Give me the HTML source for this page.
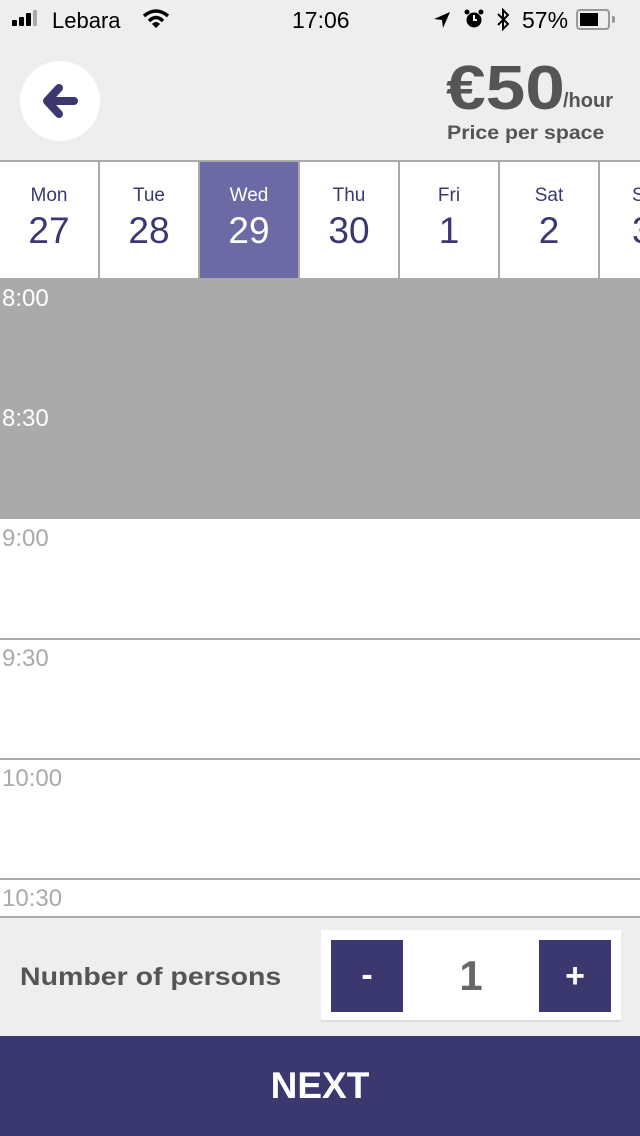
<!DOCTYPE html>
<html><head><meta charset="utf-8"><style>
*{margin:0;padding:0;box-sizing:border-box}
body{width:640px;height:1136px;overflow:hidden;background:#eee;font-family:"Liberation Sans",Arial,sans-serif;position:relative}
.a{position:absolute}
.cell{position:absolute;top:162px;width:98px;height:116px;background:#fff;text-align:center;color:#3b3870}
.cell .d{position:absolute;top:23px;width:100%;font-size:19px}
.cell .n{position:absolute;top:48px;width:100%;font-size:37px}
.t{position:absolute;left:2px;font-size:24px;color:#aaa}
.line{position:absolute;left:0;width:640px;height:2px;background:#aaa}
</style></head><body>
<!-- status bar -->
<div class="a" style="left:12px;top:20px;width:5px;height:6px;background:#000;border-radius:1px"></div>
<div class="a" style="left:19px;top:17px;width:5px;height:9px;background:#000;border-radius:1px"></div>
<div class="a" style="left:26px;top:13px;width:5px;height:13px;background:#000;border-radius:1px"></div>
<div class="a" style="left:33px;top:10px;width:4px;height:16px;background:#aaa;border-radius:1px"></div>
<div class="a" style="left:52px;top:8px;font-size:22px;color:#000">Lebara</div>
<svg class="a" style="left:142px;top:8px" width="28" height="22" viewBox="0 0 28 22"><path d="M2 8 Q14 -2 26 8" stroke="#000" stroke-width="3.5" fill="none"/><path d="M7 13 Q14 6 21 13" stroke="#000" stroke-width="3.5" fill="none"/><path d="M10 16 L14 20 L18 16 Q14 12 10 16Z" fill="#000"/></svg>
<div class="a" style="left:292px;top:7px;font-size:23px;color:#000">17:06</div>
<svg class="a" style="left:432px;top:10px" width="20" height="20" viewBox="0 0 20 20"><path d="M18 2 L2 9 L10 10 L11 18Z" fill="#000"/></svg>
<svg class="a" style="left:464px;top:9px" width="20" height="20" viewBox="0 0 20 20"><circle cx="10" cy="11" r="7.5" fill="#000"/><path d="M10 6 V11 H13" stroke="#fff" stroke-width="2" fill="none"/><circle cx="3" cy="3" r="2.5" fill="#000"/><circle cx="17" cy="3" r="2.5" fill="#000"/></svg>
<svg class="a" style="left:496px;top:8px" width="14" height="24" viewBox="0 0 14 24"><path d="M2 6 L12 16 L7 21 V2 L12 7 L2 17" stroke="#000" stroke-width="2" fill="none"/></svg>
<div class="a" style="left:522px;top:7px;font-size:23px;color:#000">57%</div>
<div class="a" style="left:576px;top:9px;width:34px;height:21px;border:2px solid #999;border-radius:4px"></div>
<div class="a" style="left:580px;top:13px;width:18px;height:13px;background:#000"></div>
<div class="a" style="left:612px;top:16px;width:3px;height:7px;background:#999;border-radius:0 2px 2px 0"></div>
<!-- header -->
<div class="a" style="left:20px;top:61px;width:80px;height:80px;border-radius:50%;background:#fff"></div>
<svg class="a" style="left:40px;top:81px" width="40" height="40" viewBox="0 0 40 40"><path d="M19 7 L7 20 L19 33 M9 20 H34" stroke="#3b3870" stroke-width="8" stroke-linecap="round" stroke-linejoin="round" fill="none"/></svg>
<div class="a" style="left:446px;top:53px;font-size:62px;font-weight:bold;color:#555;transform:scaleX(1.15);transform-origin:left">€50</div>
<div class="a" style="left:563px;top:90px;font-size:20px;font-weight:bold;color:#555">/hour</div>
<div class="a" style="left:447px;top:123px;font-size:19px;font-weight:bold;color:#555;transform:scaleX(1.12);transform-origin:left">Price per space</div>
<!-- days -->
<div class="a" style="left:0;top:160px;width:640px;height:119px;background:#aaa"></div>
<div class="cell" style="left:0"><div class="d">Mon</div><div class="n">27</div></div>
<div class="cell" style="left:100px"><div class="d">Tue</div><div class="n">28</div></div>
<div class="cell" style="left:200px;background:#6b6aa5;color:#fff"><div class="d">Wed</div><div class="n">29</div></div>
<div class="cell" style="left:300px"><div class="d">Thu</div><div class="n">30</div></div>
<div class="cell" style="left:400px"><div class="d">Fri</div><div class="n">1</div></div>
<div class="cell" style="left:500px"><div class="d">Sat</div><div class="n">2</div></div>
<div class="cell" style="left:600px;width:40px;text-align:left"><div class="d" style="left:32px">Sun</div><div class="n" style="left:32px">3</div></div>
<!-- times -->
<div class="a" style="left:0;top:279px;width:640px;height:240px;background:#aaa"></div>
<div class="a" style="left:0;top:519px;width:640px;height:398px;background:#fff"></div>
<div class="t" style="top:285px;color:#fff">8:00</div>
<div class="t" style="top:405px;color:#fff">8:30</div>
<div class="t" style="top:525px">9:00</div>
<div class="line" style="top:638px"></div>
<div class="t" style="top:645px">9:30</div>
<div class="line" style="top:758px"></div>
<div class="t" style="top:765px">10:00</div>
<div class="line" style="top:878px"></div>
<div class="t" style="top:885px">10:30</div>
<div class="line" style="top:916px"></div>
<!-- persons -->
<div class="a" style="left:20px;top:963px;font-size:25px;font-weight:bold;color:#555;transform:scaleX(1.14);transform-origin:left">Number of persons</div>
<div class="a" style="left:321px;top:930px;width:300px;height:92px;background:#fff;border-bottom:2px solid #ddd"></div>
<div class="a" style="left:331px;top:940px;width:72px;height:72px;background:#3b3870;color:#fff;font-size:34px;font-weight:bold;text-align:center;line-height:70px">-</div>
<div class="a" style="left:539px;top:940px;width:72px;height:72px;background:#3b3870;color:#fff;font-size:34px;font-weight:bold;text-align:center;line-height:72px">+</div>
<div class="a" style="left:403px;top:952px;width:136px;text-align:center;font-size:42px;font-weight:bold;color:#666">1</div>
<!-- next -->
<div class="a" style="left:0;top:1036px;width:640px;height:100px;background:#3b3870;color:#fff;font-size:37px;font-weight:bold;text-align:center;line-height:100px">NEXT</div>
</body></html>
